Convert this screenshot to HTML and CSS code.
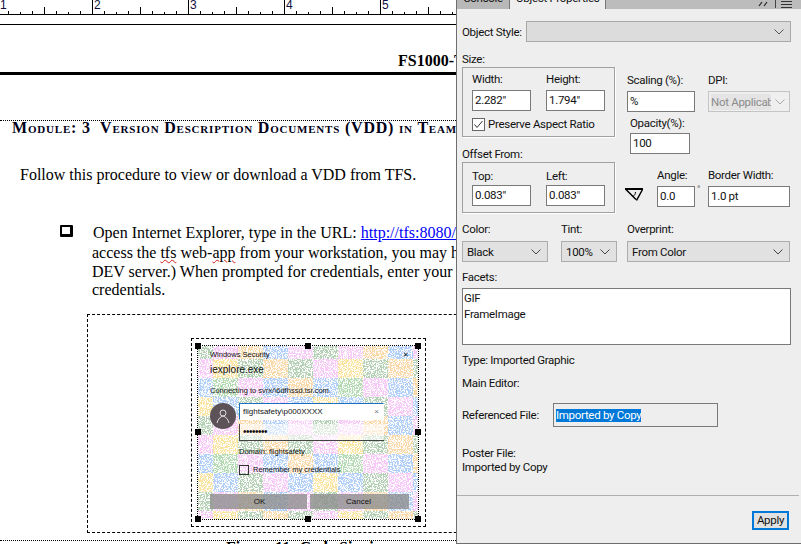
FILE: index.html
```html
<!DOCTYPE html>
<html lang="en">
<head>
<meta charset="utf-8">
<title>Object Properties</title>
<link rel="stylesheet" href="styles.css">
</head>
<body>
<div class="app">
  <main class="doc">
    <div class="ruler">
      <span class="inch inch-first">1</span><span class="inch">2</span><span class="inch">3</span><span class="inch">4</span><span class="inch">5</span>
    </div>
    <div class="top-line"></div>
    <div class="doc-id">FS1000-TFS</div>
    <div class="thick-rule"></div>
    <h1 class="module">Module: 3&nbsp; Version Description Documents (VDD) in Team Foundation Server</h1>
    <p class="intro">Follow this procedure to view or download a VDD from TFS.</p>
    <div class="step">
      <span class="bullet"></span>
      <p class="first-line">Open Internet Explorer, type in the URL: <a href="#">http://tfs:8080/tfs/web</a> (If you cannot</p>
    </div>
    <p class="cont cont-a">access the <span class="spell">tfs</span> web-<span class="spell">app</span> from your workstation, you may have to log in to the</p>
    <p class="cont">DEV server.) When prompted for credentials, enter your flightsafety domain</p>
    <p class="cont cont-c">credentials.</p>
    <div class="anchor-frame">
      <div class="graphic-frame">
        <div class="picture">
          <svg class="texture" width="220" height="173" viewBox="0 0 220 173" aria-hidden="true">
            <defs>
              <pattern id="tile" width="125" height="76" patternUnits="userSpaceOnUse" x="-10" y="-6">
                <rect width="125" height="76" fill="#f8c8f8"/>
                <rect x="0" y="0" width="25" height="19" fill="#b4d0b4"/>
                <rect x="25" y="0" width="25" height="19" fill="#f8c8f8"/>
                <rect x="50" y="0" width="25" height="19" fill="#fbd8a8"/>
                <rect x="75" y="0" width="25" height="19" fill="#b0cefa"/>
                <rect x="100" y="0" width="25" height="19" fill="#f8c8f8"/>
                <rect x="0" y="19" width="25" height="19" fill="#f8c8f8"/>
                <rect x="25" y="19" width="25" height="19" fill="#fbe4a0"/>
                <rect x="50" y="19" width="25" height="19" fill="#b4d0b4"/>
                <rect x="75" y="19" width="25" height="19" fill="#fbd8a8"/>
                <rect x="100" y="19" width="25" height="19" fill="#b4d0b4"/>
                <rect x="0" y="38" width="25" height="19" fill="#b0cefa"/>
                <rect x="25" y="38" width="25" height="19" fill="#b4dab4"/>
                <rect x="50" y="38" width="25" height="19" fill="#f8c8f8"/>
                <rect x="75" y="38" width="25" height="19" fill="#b0cefa"/>
                <rect x="100" y="38" width="25" height="19" fill="#fbd8a8"/>
                <rect x="0" y="57" width="25" height="19" fill="#fbe4a0"/>
                <rect x="25" y="57" width="25" height="19" fill="#b0cefa"/>
                <rect x="50" y="57" width="25" height="19" fill="#b4d0b4"/>
                <rect x="75" y="57" width="25" height="19" fill="#f8c8f8"/>
                <rect x="100" y="57" width="25" height="19" fill="#b0cefa"/>
              </pattern>
              <filter id="speckle" x="0" y="0" width="100%" height="100%">
                <feTurbulence type="fractalNoise" baseFrequency="0.83" numOctaves="2" seed="4"/>
                <feColorMatrix type="matrix" values="0 0 0 0 1  0 0 0 0 1  0 0 0 0 1  14 0 0 0 -6.7"/>
              </filter>
            </defs>
            <rect width="220" height="173" fill="url(#tile)"/>
            <rect width="220" height="173" fill="#fff" filter="url(#speckle)"/>
            <rect x="12" y="148" width="97" height="15" fill="#8a8a8a" opacity=".78"/>
            <rect x="112" y="148" width="99" height="15" fill="#8a8a8a" opacity=".78"/>
          </svg>
          <div class="dlg">
            <div class="dlg-title"><span>Windows Security</span><span class="dlg-x">✕</span></div>
            <div class="dlg-app">iexplore.exe</div>
            <div class="dlg-conn">Connecting to svrx/\6dfhssd.tsr.com.</div>
            <div class="cred">
              <svg class="avatar" width="26" height="26" viewBox="0 0 26 26" aria-hidden="true">
                <circle cx="13" cy="13" r="13" fill="#5d5258"/>
                <circle cx="13" cy="10" r="3" fill="none" stroke="#ddd"/>
                <path d="M7 20c1-4 3-6 6-7 3 1 5 3 6 7" fill="none" stroke="#ddd"/>
              </svg>
              <div class="cred-fields">
                <div class="field-user"><span>flightsafety\p000XXXX</span><span class="field-x">×</span></div>
                <div class="field-pass">••••••••</div>
                <div class="dlg-domain">Domain: flightsafety</div>
                <div class="dlg-remember"><span class="dlg-box"></span><span>Remember my credentials</span></div>
              </div>
            </div>
            <div class="dlg-btns"><span>OK</span><span>Cancel</span></div>
          </div>
          <span class="handle h-tl"></span><span class="handle h-tc"></span><span class="handle h-tr"></span>
          <span class="handle h-ml"></span><span class="handle h-mr"></span>
          <span class="handle h-bl"></span><span class="handle h-bc"></span><span class="handle h-br"></span>
        </div>
      </div>
    </div>
    <div class="caption">Figure 11: Code Signing</div>
  </main>

  <aside class="panel">
    <div class="tabs">
      <div class="tab tab-off"><span>Console</span></div>
      <div class="tab tab-on"><span>Object Properties</span></div>
      <div class="tab-tools">
        <svg width="12" height="8" viewBox="0 0 12 8" aria-hidden="true"><path d="M1 6l3-4M6 6l3-4" stroke="#222" stroke-width="1.2" fill="none"/></svg>
        <span class="tool-sep"></span>
        <svg width="11" height="8" viewBox="0 0 11 8" aria-hidden="true"><path d="M0 1.5h11M0 4.5h11M0 7.5h11" stroke="#333"/></svg>
      </div>
    </div>

    <div class="style-row">
      <span class="lbl">Object Style:</span>
      <div class="sel sel-style"><span></span><svg class="chev" width="10" height="6" viewBox="0 0 10 6"><path d="M.5.5 5 5 9.5.5" fill="none" stroke="#555"/></svg></div>
    </div>

    <div class="geom">
      <div class="geom-left">
        <div class="lbl lbl-size">Size:</div>
        <div class="group group-size">
          <div class="pair">
            <div class="cell"><span class="lbl">Width:</span><span class="inp w59">2.282"</span></div>
            <div class="cell"><span class="lbl">Height:</span><span class="inp w59">1.794"</span></div>
          </div>
          <div class="check">
            <svg class="checkbox" width="13" height="13" viewBox="0 0 13 13" aria-hidden="true"><rect x=".5" y=".5" width="12" height="12" fill="#fff" stroke="#666"/><path d="M2.5 6.500 5 9.500 10.500 3" fill="none" stroke="#333"/></svg>
            <span>Preserve Aspect Ratio</span>
          </div>
        </div>
        <div class="lbl lbl-offset">Offset From:</div>
        <div class="group group-offset">
          <div class="pair">
            <div class="cell"><span class="lbl">Top:</span><span class="inp w59">0.083"</span></div>
            <div class="cell"><span class="lbl">Left:</span><span class="inp w59">0.083"</span></div>
          </div>
        </div>
      </div>
      <div class="geom-right">
        <div class="pair-right">
          <div class="cell scaling"><span class="lbl">Scaling (%):</span><span class="inp w68">%</span></div>
          <div class="cell"><span class="lbl">DPI:</span>
            <div class="sel sel-dpi"><span class="dpi-text">Not Applicab</span><svg class="chev" width="10" height="6" viewBox="0 0 10 6"><path d="M.5.5 5 5 9.5.5" fill="none" stroke="#aaa"/></svg></div>
          </div>
        </div>
        <div class="cell opacity"><span class="lbl">Opacity(%):</span><span class="inp w60">100</span></div>
        <div class="angle-row">
          <svg class="angle-icon" width="19" height="14" viewBox="0 0 19 14" aria-hidden="true"><path d="M0 1h18" stroke="#000" stroke-width="2"/><path d="M1 1.500 11 11.500M17.500 1.500 11.500 12.500" stroke="#000" stroke-width="1.500" fill="none"/><path d="M8 8.500c1.500-1 2.500-2.500 2.500-4.500" stroke="#000" fill="none"/></svg>
          <div class="cell angle"><span class="lbl">Angle:</span><span class="inp w38">0.0</span></div>
          <span class="degree">°</span>
          <div class="cell"><span class="lbl">Border Width:</span><span class="inp w82">1.0 pt</span></div>
        </div>
      </div>
    </div>

    <div class="color-row">
      <div class="cell col-color"><span class="lbl">Color:</span>
        <div class="sel sel-color"><span>Black</span><svg class="chev" width="10" height="6" viewBox="0 0 10 6"><path d="M.5.5 5 5 9.5.5" fill="none" stroke="#444"/></svg></div>
      </div>
      <div class="cell col-tint"><span class="lbl">Tint:</span>
        <div class="sel sel-tint"><span>100%</span><svg class="chev" width="10" height="6" viewBox="0 0 10 6"><path d="M.5.5 5 5 9.5.5" fill="none" stroke="#444"/></svg></div>
      </div>
      <div class="cell"><span class="lbl">Overprint:</span>
        <div class="sel sel-over"><span>From Color</span><svg class="chev" width="10" height="6" viewBox="0 0 10 6"><path d="M.5.5 5 5 9.5.5" fill="none" stroke="#444"/></svg></div>
      </div>
    </div>

    <div class="lbl lbl-facets">Facets:</div>
    <div class="facets"><div>GIF</div><div>FrameImage</div></div>

    <div class="lbl lbl-type">Type: Imported Graphic</div>
    <div class="lbl lbl-editor">Main Editor:</div>
    <div class="ref-row">
      <span class="lbl">Referenced File:</span>
      <div class="ref-box"><span class="selected">Imported by Copy</span></div>
    </div>
    <div class="lbl lbl-poster">Poster File:</div>
    <div class="lbl lbl-copy">Imported by Copy</div>
    <div class="sep"></div>
    <div class="actions"><span class="apply">Apply</span></div>
  </aside>
</div>
</body>
</html>
```
FILE: styles.css
```css
* { box-sizing: border-box; }
html, body { margin: 0; height: 100%; overflow: hidden; background: #fff; }
p, h1 { margin: 0; }

.app { display: flex; width: 801px; height: 544px; overflow: hidden; }

/* ---------- document ---------- */
.doc {
  width: 456px; height: 544px; flex: none; overflow: hidden; background: #fff;
  font-family: "Liberation Serif", serif; color: #000; white-space: nowrap;
}
.ruler {
  display: flex; height: 15px; border-bottom: 1px solid #000; padding-left: 0; overflow: hidden;
  font: 12px/14px "Liberation Sans", sans-serif; color: #101040;
  background-image:
    repeating-linear-gradient(90deg, #000 0 1px, transparent 1px 96px),
    repeating-linear-gradient(90deg, #000 0 1px, transparent 1px 96px),
    repeating-linear-gradient(90deg, #000 0 1px, transparent 1px 24px),
    repeating-linear-gradient(90deg, #000 0 1px, transparent 1px 12px);
  background-size: 96px 14px, 96px 7px, 24px 3px, 12px 2px;
  background-position: 92px 0, 44px 7px, 8px 11px, 8px 12px;
  background-repeat: repeat-x;
}
.inch { flex: none; width: 96px; padding-left: 2px; margin-top: -2px; }
.inch-first { width: 92px; padding-left: 0; }
.top-line { height: 1px; margin-top: 9px; background: #000; }
.doc-id {
  height: 47px; padding: 26px 0 0 398px;
  font-size: 16px; line-height: 20px; font-weight: bold;
}
.thick-rule { height: 3px; background: #000; }
.module {
  margin-top: 45px; padding: 0 0 0 12px; border-top: 1px dotted #000;
  font-size: 16px; line-height: 14px; height: 15px; font-weight: bold; font-variant: small-caps;
  letter-spacing: .8px; white-space: pre; color: #000018;
}
.intro { margin: 30px 0 0 20px; font-size: 16px; line-height: 20px; }
.step { display: flex; height: 19px; margin: 38px 0 0 60px; line-height: 19px; font-size: 16px; }
.bullet {
  width: 13px; height: 12px; margin-top: 2px; flex: none;
  border: 2px solid #000; border-right-width: 3px; border-bottom-width: 3px; border-radius: 1px;
}
.first-line { margin-left: 20px; }
.first-line a { color: #0000ff; text-decoration: underline; }
.cont { margin-left: 92px; font-size: 16px; line-height: 19px; }
.cont-a { margin-top: 1px; }
.cont-c { line-height: 18px; }
.spell { text-decoration: underline wavy #d02020 1px; text-underline-offset: 1px; }

.anchor-frame {
  width: 420px; height: 219px; margin: 15px 0 0 87px; padding: 23px 0 0 103px;
  border: 1px dashed #000;
}
.graphic-frame {
  width: 235px; height: 189px; padding: 7px 0 0 6px;
  border: 1px dashed #000;
}
.picture { position: relative; width: 220px; height: 173px; border: 0; }
.texture { position: absolute; left: 0; top: 0; display: block; outline: 1px dotted #000; }
.handle { position: absolute; width: 6px; height: 6px; background: #000; }
.h-tl { left: -3px; top: -3px; }
.h-tc { left: 107px; top: -3px; }
.h-tr { right: -3px; top: -3px; }
.h-ml { left: -3px; top: 83px; }
.h-mr { right: -3px; top: 83px; }
.h-bl { left: -3px; bottom: -3px; }
.h-bc { left: 107px; bottom: -3px; }
.h-br { right: -3px; bottom: -3px; }

.dlg { position: relative; padding: 4px 9px 0 12px; font-family: "Liberation Sans", sans-serif; color: #111; }
.dlg-title { display: flex; justify-content: space-between; font-size: 7.500px; line-height: 9px; }
.dlg-x { font-size: 7px; }
.dlg-app { margin-top: 5px; font-size: 10px; line-height: 12px; }
.dlg-conn { margin-top: 10px; font-size: 7.500px; line-height: 10px; white-space: nowrap; }
.cred { display: flex; margin-top: 7px; }
.avatar { flex: none; margin: 0 3px 0 0; }
.cred-fields { width: 145px; }
.field-user {
  display: flex; justify-content: space-between; height: 17px; padding: 0 4px 0 3px;
  background: #fff; border: 1px solid #fff; border-top-color: #1a6fc0; border-left-color: #1a6fc0;
  font-size: 8px; line-height: 15px;
}
.field-x { color: #777; }
.field-pass {
  height: 17px; margin-top: 4px; padding-left: 3px;
  background: rgba(255,255,255,.55); border-bottom: 1px solid #444; border-left: 1px solid #444;
  font-size: 10px; line-height: 16px; letter-spacing: -.5px;
}
.dlg-domain { margin-top: 6px; font-size: 7.500px; line-height: 10px; }
.dlg-remember { display: flex; gap: 4px; align-items: center; margin-top: 8px; font-size: 7.500px; line-height: 10px; white-space: nowrap; }
.dlg-box { width: 10px; height: 10px; border: 1px solid #333; flex: none; }
.dlg-btns { display: flex; margin-top: 19px; font-size: 8px; line-height: 15px; text-align: center; }
.dlg-btns span { width: 99px; }

.caption { margin: 7px 0 0 0; padding: 0 0 0 226px; border-top: 1px dotted #000; font-size: 16px; line-height: 14px; font-weight: bold; }

/* ---------- panel ---------- */
.panel {
  width: 345px; height: 544px; flex: none; overflow: hidden;
  background: #eee; border-left: 1px solid #6e6e6e; border-bottom: 1px solid #6e6e6e;
  font: 11.500px/16px Roboto, sans-serif; letter-spacing: -.3px; color: #111;
}
.tabs { display: flex; height: 9px; background: #bcbcbc; margin: 0; overflow: hidden; }
.tab { height: 9px; overflow: hidden; text-align: center; line-height: 14px; }
.tab span { display: block; margin-top: -9px; }
.tab-off { width: 52px; background: #b8b8b8; }
.tab-on { width: 97px; background: #eee; border-left: 1px solid #777; border-right: 1px solid #777; }
.tab-tools { flex: 1; display: flex; justify-content: flex-end; align-items: flex-start; gap: 5px; padding-right: 9px; }
.tool-sep { width: 1px; height: 8px; background: #444; }

.lbl { display: block; line-height: 16px; white-space: nowrap; }
.style-row { display: flex; align-items: center; height: 21px; margin: 12px 0 0 5px; }
.style-row .lbl { width: 64px; }
.sel {
  display: flex; align-items: center; justify-content: space-between;
  background: #e1e1e1; border: 1px solid #adadad; padding: 0 6px 0 4px; height: 21px;
}
.sel-style { width: 265px; background: #dcdcdc; border-color: #a8a8a8; }
.chev { flex: none; display: block; }

.geom { display: flex; margin: 9px 0 0 5px; }
.geom-left { width: 153px; flex: none; }
.lbl-size { height: 16px; }
.group { border: 1px solid #a0a0a0; box-shadow: 1px 1px 0 #fff; padding: 3px 9px 0; }
.group-size { height: 70px; }
.lbl-offset { margin-top: 9px; height: 16px; }
.group-offset { height: 51px; margin-top: 0; padding-top: 3px; }
.group-offset .cell .lbl { height: 19px; padding-top: 2px; }
.pair { display: flex; gap: 15px; }
.cell { display: flex; flex-direction: column; align-items: flex-start; }
.cell .lbl { height: 19px; }
.inp {
  display: block; height: 21px; background: #fff; border: 1px solid #7a7a7a;
  padding: 0 2px; line-height: 19px; white-space: nowrap;
}
.w59 { width: 59px; }
.w68 { width: 68px; }
.w60 { width: 60px; }
.w38 { width: 38px; }
.w82 { width: 82px; }
.check { display: flex; align-items: center; gap: 3px; margin-top: 5px; white-space: nowrap; }
.checkbox { flex: none; display: block; }

.geom-right { margin: 21px 0 0 12px; width: 164px; }
.pair-right { display: flex; gap: 13px; }
.sel-dpi { width: 82px; padding: 0 4px 0 2px; background: #efefef; border-color: #c4c4c4; overflow: hidden; }
.dpi-text { background: #e4e4e4; color: #8c8c8c; white-space: nowrap; width: 60px; overflow: hidden; }
.opacity { margin: 3px 0 0 3px; height: 40px; }
.opacity .lbl { height: 18px; }
.angle-row { display: flex; margin-top: 12px; align-items: flex-start; }
.angle-icon { flex: none; margin: 21px 13px 0 -2px; }
.degree { width: 13px; margin-top: 14px; padding-left: 2px; font-size: 9px; color: #555; }
.angle { margin: 0; }

.color-row { display: flex; margin: 8px 0 0 5px; }
.color-row .lbl { height: 20px; }
.col-color { width: 99px; }
.col-tint { width: 66px; }
.sel-color { width: 86px; }
.sel-tint { width: 56px; }
.sel-over { width: 163px; }

.lbl-facets { margin: 7px 0 0 5px; height: 19px; }
.facets {
  width: 329px; height: 57px; margin-left: 5px; padding: 1px 1px;
  background: #fff; border: 1px solid #7a7a7a;
}
.lbl-type { margin: 7px 0 0 5px; }
.lbl-editor { margin: 7px 0 0 5px; }
.ref-row { display: flex; align-items: center; height: 24px; margin: 12px 0 0 5px; }
.ref-row .lbl { width: 91px; }
.ref-box { width: 165px; height: 24px; padding: 3px 2px; border: 1px solid #7a7a7a; background: #eee; }
.selected { display: inline-block; height: 13px; background: #0078d7; color: #fff; line-height: 12px; }
.lbl-poster { margin: 18px 0 0 5px; line-height: 16px; }
.lbl-copy { margin: -2px 0 0 5px; line-height: 16px; }
.sep { width: 342px; height: 1px; margin-top: 20px; background: #b0b0b0; }
.actions { display: flex; justify-content: flex-end; padding: 15px 12px 0 0; }
.apply {
  display: block; width: 37px; height: 19px; text-align: center;
  border: 2px solid #0078d7; background: #e1e1e1; line-height: 15px;
}
```
